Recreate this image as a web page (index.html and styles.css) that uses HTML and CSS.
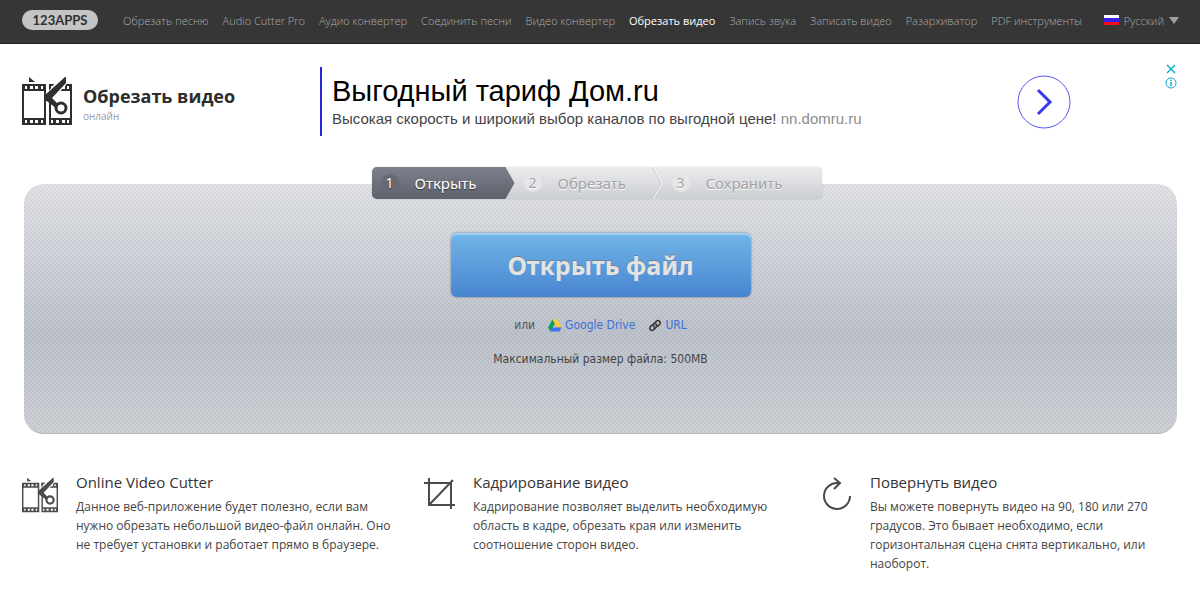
FILE: index.html
```html
<!DOCTYPE html>
<html lang="ru">
<head>
<meta charset="utf-8">
<title>Обрезать видео онлайн</title>
<link rel="stylesheet" href="styles.css">
</head>
<body>
<svg class="defs" aria-hidden="true">
  <symbol id="film" viewBox="0 0 50 48">
    <path fill="currentColor" fill-rule="evenodd" d="M0 7H24V48H0ZM2 14V41H22V14ZM3 9h2v3H3ZM8 9h3v3H8ZM13 9h3v3h-3ZM19 9h2v3h-2ZM3 43h2v3H3ZM8 43h3v3H8ZM13 43h3v3h-3ZM19 43h2v3h-2Z"/>
    <path fill="currentColor" fill-rule="evenodd" d="M27 7H50V48H27ZM29 14V41H48V14ZM29 9h2v3h-2ZM34 9h3v3h-3ZM40 9h3v3h-3ZM45 9h2v3h-2ZM29 43h2v3h-2ZM34 43h3v3h-3ZM40 43h3v3h-3ZM45 43h2v3h-2Z"/>
    <path fill="currentColor" d="M7 0L13 5H7Z"/>
    <path fill="#fff" d="M33 6H44V8L30 23L26 22V15Z"/>
    <path fill="currentColor" d="M27 7H31L27 12Z"/>
    <path fill="currentColor" d="M22 19L43 0H44V6L30 21L37 28L34 31L22 22Z"/>
    <circle cx="39" cy="31" r="5" fill="#fff" stroke="currentColor" stroke-width="3"/>
  </symbol>
</svg>

<header class="topbar">
  <a class="brand" href="#">123APPS</a>
  <nav class="menu">
    <a href="#">Обрезать песню</a>
    <a href="#">Audio Cutter Pro</a>
    <a href="#">Аудио конвертер</a>
    <a href="#">Соединить песни</a>
    <a href="#">Видео конвертер</a>
    <a class="active" href="#">Обрезать видео</a>
    <a href="#">Запись звука</a>
    <a href="#">Записать видео</a>
    <a href="#">Разархиватор</a>
    <a href="#">PDF инструменты</a>
  </nav>
  <button class="lang" type="button"><span class="flag"></span>Русский<span class="caret"></span></button>
</header>

<section class="intro">
  <a class="product" href="#">
    <svg class="product-icon" aria-hidden="true"><use href="#film"/></svg>
    <span class="product-text"><span class="product-name">Обрезать видео</span><span class="product-sub">онлайн</span></span>
  </a>
  <aside class="ad">
    <div class="ad-copy">
      <a class="ad-title" href="#">Выгодный тариф Дом.ru</a>
      <p class="ad-text">Высокая скорость и широкий выбор каналов по выгодной цене! <a href="#">nn.domru.ru</a></p>
    </div>
    <a class="ad-go" href="#" aria-label="Перейти"><svg viewBox="0 0 54 54" aria-hidden="true"><circle cx="27" cy="27" r="26" fill="none" stroke="#5858ee"/><path d="M21 15L33 27L21 39" fill="none" stroke="#3a3af0" stroke-width="3"/></svg></a>
    <div class="ad-tools">
      <button type="button" aria-label="Закрыть"><svg viewBox="0 0 12 12"><path d="M2 2L10 10M10 2L2 10" stroke="#00aecd" stroke-width="1.400"/></svg></button>
      <button type="button" aria-label="Информация"><svg viewBox="0 0 12 12"><circle cx="6" cy="6" r="5" fill="none" stroke="#00aecd"/><path d="M6 5V9M6 2.800V4" stroke="#00aecd" stroke-width="1.500"/></svg></button>
    </div>
  </aside>
</section>

<main class="panel">
  <ol class="steps">
    <li class="step current"><span class="num">1</span><span class="label">Открыть</span></li>
    <li class="step cut"><span class="num">2</span><span class="label">Обрезать</span><svg class="chevron" viewBox="0 0 12 32" aria-hidden="true"><path d="M2 0L11 16L2 32" fill="none" stroke="#fff"/><path d="M1 0L10 16L1 32" fill="none" stroke="#c4c6ca"/></svg></li>
    <li class="step save"><span class="num">3</span><span class="label">Сохранить</span></li>
  </ol>
  <button class="open" type="button"><span>Открыть файл</span></button>
  <div class="sources">
    <span>или</span>
    <a href="#"><svg viewBox="0 0 14 12" aria-hidden="true"><path fill="#109d58" d="M4.500 0L0 8L2.300 12L7 4Z"/><path fill="#fcca2c" d="M4.500 0H9L13.500 8H9Z"/><path fill="#3d6ff2" d="M4.500 8H13.500L11.500 12H2.300Z"/></svg>Google Drive</a>
    <a href="#"><svg viewBox="0 0 14 14" aria-hidden="true"><g fill="none" stroke="#333" stroke-width="1.700" stroke-linecap="round"><path d="M6 8.500A2.500 2.500 0 0 1 6 5L9 2A2.500 2.500 0 0 1 12.300 5.500L10 7.800"/><path d="M8 5.500A2.500 2.500 0 0 1 8 9L5 12A2.500 2.500 0 0 1 1.700 8.500L4 6.200"/></g></svg>URL</a>
  </div>
  <p class="limit">Максимальный размер файла: 500MB</p>
</main>

<section class="features">
  <article class="feature">
    <svg class="feature-icon" aria-hidden="true"><use href="#film"/></svg>
    <div><h2>Online Video Cutter</h2><p>Данное веб-приложение будет полезно, если вам нужно обрезать небольшой видео-файл онлайн. Оно не требует установки и работает прямо в браузере.</p></div>
  </article>
  <article class="feature">
    <svg class="feature-icon" viewBox="0 0 36 36" aria-hidden="true"><path d="M5 6H32V32M10 1V28H36M10 28L34 3" fill="none" stroke="currentColor" stroke-width="2"/></svg>
    <div><h2>Кадрирование видео</h2><p>Кадрирование позволяет выделить необходимую область в кадре, обрезать края или изменить соотношение сторон видео.</p></div>
  </article>
  <article class="feature">
    <svg class="feature-icon" viewBox="0 0 36 36" aria-hidden="true"><g fill="none" stroke="currentColor" stroke-width="2"><path d="M24 6H22A13 13 0 1 0 34 19"/><path d="M18 1L24 6L18 12"/></g></svg>
    <div><h2>Повернуть видео</h2><p>Вы можете повернуть видео на 90, 180 или 270 градусов. Это бывает необходимо, если горизонтальная сцена снята вертикально, или наоборот.</p></div>
  </article>
  <article class="feature">
    <span class="feature-icon"></span>
    <div><h2>Поддержка любых форматов</h2></div>
  </article>
  <article class="feature">
    <span class="feature-icon"></span>
    <div><h2>Умный выбор</h2></div>
  </article>
  <article class="feature">
    <span class="feature-icon"></span>
    <div><h2>Любой размер файла</h2></div>
  </article>
</section>
</body>
</html>
```

FILE: styles.css
```css
* { box-sizing: border-box; }
html, body { height: 100%; }
body { margin: 0; overflow: hidden; background: #fff; color: #333; font-family: "Open Sans", "Noto Sans", sans-serif; font-size: 12px; }
a { color: inherit; text-decoration: none; }
button { padding: 0; border: 0; background: none; font: inherit; color: inherit; cursor: pointer; }
p, h2, ol { margin: 0; padding: 0; }
.defs { display: none; }

.topbar { display: flex; align-items: center; height: 44px; padding: 0 21px 3px 22px; background: #363636; border-bottom: 1px solid #222; color: #acacac; font-size: 11px; font-weight: 300; }
.brand { width: 76px; height: 20px; margin-right: 25px; border-radius: 10px; background: #c4c4c4; color: #303030; font: 700 13px/20px Lato, sans-serif; text-align: center; }
.menu { display: flex; flex: 1; gap: 14px; white-space: nowrap; }
.menu .active { color: #fff; font-weight: 400; }
.lang { display: flex; align-items: center; gap: 5px; }
.flag { width: 15px; height: 10px; background: linear-gradient(#fff 33%, #3b1be8 33% 67%, #f01020 67%); }
.caret { border: 5px solid transparent; border-top: 7px solid #a0a0a0; border-bottom: 0; }

.intro { display: flex; padding: 23px 23px 0 22px; height: 140px; }
.product { display: flex; width: 298px; padding-top: 10px; gap: 11px; color: #2d2d2d; }
.product-icon { width: 50px; height: 48px; color: #2d2f30; }
.product-text { display: flex; flex-direction: column; padding-top: 7px; }
.product-name { font-size: 18px; font-weight: 700; line-height: 24px; }
.product-sub { font-size: 10px; line-height: 16px; color: #999; }
.ad { display: flex; flex: 1; align-items: flex-start; height: 69px; border-left: 2px solid #2424d8; font-family: "Liberation Sans", Arial, sans-serif; }
.ad-copy { flex: 1; padding: 6px 0 0 10px; }
.ad-title { display: block; color: #000; font-size: 29px; line-height: 36px; }
.ad-text { color: #444; font-size: 15px; line-height: 20px; }
.ad-text a { color: #8c8c8c; }
.ad-go { width: 54px; height: 54px; margin: 8px 94px 0 0; }
.ad-tools { display: grid; gap: 2px; margin-top: -4px; }
.ad-tools button { height: 12px; line-height: 12px; }
.ad-tools svg { display: block; width: 12px; height: 12px; }

.panel { display: flex; flex-direction: column; align-items: center; height: 250px; margin: 0 23px 0 24px; border-radius: 20px; border-bottom: 1px solid #b3b5b9;
  background: repeating-conic-gradient(rgba(90,100,130,.05) 0 25%, rgba(255,255,255,.08) 0 50%) 0 0 / 4px 4px, linear-gradient(#dfe0e3, #babfc8 60%, #cbced2);
  font-family: "DejaVu Sans Condensed", Tahoma, sans-serif; }
.steps { display: flex; width: 450px; height: 32px; margin: -17px 8px 0 0; border-radius: 5px; overflow: hidden; list-style: none; background: linear-gradient(#ececee, #cbced2); box-shadow: 0 0 1px #888b93; font: 15px/30px "Noto Sans", Tahoma, sans-serif; color: #a1a2a5; text-shadow: 0 1px 0 #fff; }
.step { display: flex; align-items: center; padding-left: 9px; }
.num { width: 18px; height: 18px; margin-right: 16px; border-radius: 9px; background: #e6e6e8; font-size: 14px; line-height: 18px; text-align: center; }
.current { width: 143px; background: linear-gradient(#7e818c, #5d616c); color: #fff; text-shadow: 0 1px 1px #333; clip-path: polygon(0 0, 134px 0, 100% 50%, 134px 100%, 0 100%); }
.current .num { background: #666a75; }
.cut { width: 148px; }
.save { flex: 1; }
.chevron { width: 12px; height: 32px; margin-left: auto; }
.open { width: 300px; height: 64px; margin-top: 34px; border-radius: 6px; background: linear-gradient(#71b5e8, #4885cf); box-shadow: inset 0 2px 1px #9fd0f5, 0 0 2px #53637b; font: 700 25px/64px "Noto Sans", Tahoma, sans-serif; color: #e3e3e3; text-shadow: 0 -1px 0 #6e8296; }
.sources { display: flex; align-items: center; gap: 13px; margin-top: 19px; line-height: 18px; color: #555; }
.sources a { display: flex; align-items: center; gap: 3px; color: #3e71d3; }
.sources svg { width: 14px; height: 13px; }
.limit { margin-top: 16px; line-height: 18px; color: #444; }

.features { display: grid; grid-template-columns: repeat(3, 1fr); gap: 22px 21px; padding: 37px 8px 0 22px; }
.feature { display: flex; gap: 18px; }
.feature-icon { flex: none; width: 36px; height: 36px; margin-top: 6px; color: #4b4b4b; }
.feature h2 { font-size: 15px; font-weight: 500; line-height: 22px; margin-bottom: 4px; }
.feature p { line-height: 19px; color: #444; }
```
